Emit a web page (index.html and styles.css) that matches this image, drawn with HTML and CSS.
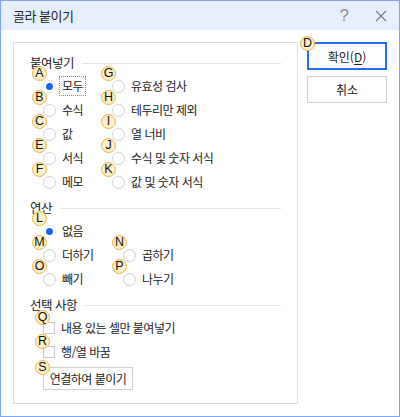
FILE: index.html
```html
<!DOCTYPE html>
<html lang="ko">
<head>
  <meta charset="UTF-8">
  <title>골라 붙이기</title>
  <link rel="stylesheet" href="styles.css">
</head>
<body>
  <div class="window">
    <div class="titlebar">
      <span class="title">골라 붙이기</span>
      <span class="help">?</span>
      <svg class="close" width="12" height="12" viewBox="0 0 12 12">
        <path d="M1 1 L11 11 M11 1 L1 11" stroke="#7a7a7a" stroke-width="1.3" fill="none"/>
      </svg>
    </div>

    <div class="content">
      <div class="group">
        <!-- 붙여넣기 -->
        <div class="section">
          <div class="header">붙여넣기</div>
          <div class="grid paste">
            <div class="opt"><span class="key">A</span><span class="radio on"></span><span class="label focus">모두</span></div>
            <div class="opt"><span class="key">B</span><span class="radio"></span><span class="label">수식</span></div>
            <div class="opt"><span class="key">C</span><span class="radio"></span><span class="label">값</span></div>
            <div class="opt"><span class="key">E</span><span class="radio"></span><span class="label">서식</span></div>
            <div class="opt"><span class="key">F</span><span class="radio"></span><span class="label">메모</span></div>
            <div class="opt"><span class="key">G</span><span class="radio"></span><span class="label">유효성 검사</span></div>
            <div class="opt"><span class="key">H</span><span class="radio"></span><span class="label">테두리만 제외</span></div>
            <div class="opt"><span class="key">I</span><span class="radio"></span><span class="label">열 너비</span></div>
            <div class="opt"><span class="key">J</span><span class="radio"></span><span class="label">수식 및 숫자 서식</span></div>
            <div class="opt"><span class="key">K</span><span class="radio"></span><span class="label">값 및 숫자 서식</span></div>
          </div>
        </div>

        <!-- 연산 -->
        <div class="section">
          <div class="header">연산</div>
          <div class="grid ops">
            <div class="opt wide"><span class="key">L</span><span class="radio on"></span><span class="label">없음</span></div>
            <div class="opt"><span class="key">M</span><span class="radio"></span><span class="label">더하기</span></div>
            <div class="opt"><span class="key">N</span><span class="radio"></span><span class="label">곱하기</span></div>
            <div class="opt"><span class="key">O</span><span class="radio"></span><span class="label">빼기</span></div>
            <div class="opt"><span class="key">P</span><span class="radio"></span><span class="label">나누기</span></div>
          </div>
        </div>

        <!-- 선택 사항 -->
        <div class="section">
          <div class="header">선택 사항</div>
          <div class="checks">
            <div class="opt"><span class="key key-check">Q</span><span class="check"></span><span class="label">내용 있는 셀만 붙여넣기</span></div>
            <div class="opt"><span class="key key-check">R</span><span class="check"></span><span class="label">행/열 바꿈</span></div>
          </div>
          <div class="link-wrap">
            <button class="link-btn"><span class="key key-btn">S</span>연결하여 붙이기</button>
          </div>
        </div>
      </div>

      <div class="buttons">
        <button class="btn primary"><span class="key key-btn">D</span>확인(<u>D</u>)</button>
        <button class="btn">취소</button>
      </div>
    </div>
  </div>
</body>
</html>
```

FILE: styles.css
```css
/* Dialog frame */
* {
  box-sizing: border-box;
}
body {
  margin: 0;
  font-family: "Noto Sans CJK KR", "Liberation Sans", sans-serif;
  font-size: 12px;
  color: #222;
}
.window {
  width: 400px;
  height: 417px;
  border: 1px solid #7ea6f4;
  background: #fff;
}
.titlebar {
  height: 29px;
  background: #e8effc;
  display: flex;
  align-items: center;
  padding-left: 12px;
}
.title {
  flex: 1;
  font-size: 13px;
  letter-spacing: -0.5px;
  color: #222;
}
.help {
  font-family: "Liberation Sans", sans-serif;
  font-size: 17px;
  color: #8a8a8a;
  margin-right: 26px;
}
.close {
  margin-right: 12px;
}

/* Body: group box + side buttons */
.content {
  display: flex;
  padding: 12px 12px 0 12px;
}
.group {
  width: 285px;
  height: 362px;
  border: 1px solid #dcdcdc;
  padding-top: 9px;
}
.section + .section {
  margin-top: 3px;
}
.header {
  display: flex;
  align-items: center;
  gap: 8px;
  height: 20px;
  padding: 0 16px;
  margin-bottom: 2px;
  font-size: 12.5px;
  letter-spacing: -0.5px;
}
.header::after {
  content: "";
  flex: 1;
  height: 1px;
  background: #e2e2e2;
  margin-top: 2px;
}

/* Option rows */
.grid {
  display: grid;
  padding-left: 29px;
}
.paste {
  grid-template-columns: 69px 1fr;
  grid-template-rows: repeat(5, 24px);
  grid-auto-flow: column;
}
.ops {
  grid-template-columns: 80px 1fr;
  grid-auto-rows: 24px;
}
.ops .wide {
  grid-column: span 2;
}
.checks {
  padding-left: 29px;
}
.checks .opt {
  height: 24px;
}
.opt {
  position: relative;
  display: flex;
  align-items: center;
  gap: 6px;
}
.label {
  letter-spacing: -0.5px;
  white-space: nowrap;
  line-height: 16px;
}
.label.focus {
  outline: 1px dotted #8a8a8a;
  outline-offset: 1px;
  padding: 0 1px;
  margin-left: -1px;
}
.radio {
  width: 13px;
  height: 13px;
  border-radius: 50%;
  border: 1px solid #cfcfcf;
  background: #fff;
  flex: none;
  position: relative;
}
.radio.on {
  border-color: #e4ecfb;
}
.radio.on::after {
  content: "";
  position: absolute;
  left: 2px;
  top: 2px;
  width: 7px;
  height: 7px;
  border-radius: 50%;
  background: #1a66f0;
}
.check {
  width: 12px;
  height: 12px;
  border: 1px solid #c8c8c8;
  background: #fff;
  flex: none;
}

/* Access key badges (overlay) */
.key {
  position: absolute;
  left: -11px;
  top: -8px;
  width: 15px;
  height: 15px;
  border-radius: 50%;
  border: 1.5px solid #e8b446;
  background: #fdf0c8;
  color: #111;
  font-family: "Liberation Sans", sans-serif;
  font-size: 12.5px;
  line-height: 12px;
  text-align: center;
  letter-spacing: 0;
  z-index: 1;
}
.key-check {
  left: -8px;
  top: -6px;
}
.key-btn {
  left: -9px;
  top: -8px;
}

.link-wrap {
  padding-left: 29px;
  margin-top: 3px;
}
.link-btn {
  position: relative;
  width: 90px;
  height: 23px;
  border: 1px solid #cfcfcf;
  background: #fff;
  font-family: inherit;
  font-size: 12px;
  letter-spacing: -0.5px;
  color: #222;
  padding: 0;
}

/* Side buttons */
.buttons {
  display: flex;
  flex-direction: column;
  gap: 6px;
  margin-left: 9px;
}
.btn {
  position: relative;
  width: 80px;
  height: 27px;
  border: 1px solid #cfcfcf;
  background: #fff;
  font-family: inherit;
  font-size: 12px;
  color: #222;
  padding: 0;
}
.btn.primary {
  height: 28px;
  border: 2px solid #1f6ef5;
}
.btn u {
  text-underline-offset: 2px;
}
```
